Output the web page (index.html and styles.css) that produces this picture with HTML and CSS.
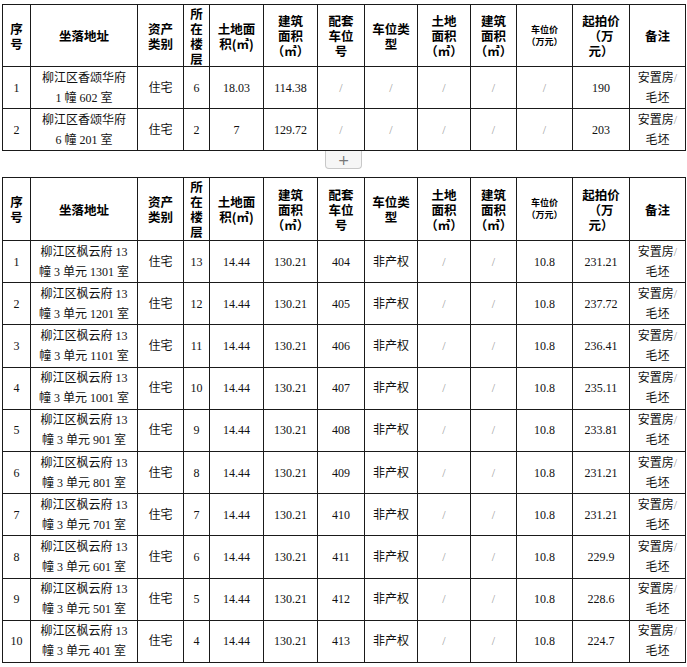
FILE: index.html
```html
<!DOCTYPE html>
<html lang="zh-CN">
<head>
<meta charset="utf-8">
<title>拍卖标的</title>
<link rel="stylesheet" href="styles.css">
</head>
<body>
<div class="page">
  <table class="grid">
    <colgroup>
      <col class="c1"><col class="c2"><col class="c3"><col class="c4"><col class="c5"><col class="c6"><col class="c7"><col class="c8"><col class="c9"><col class="c10"><col class="c11"><col class="c12"><col class="c13">
    </colgroup>
    <thead>
      <tr class="head">
        <th>序<br>号</th>
        <th>坐落地址</th>
        <th>资产<br>类别</th>
        <th>所<br>在<br>楼<br>层</th>
        <th>土地面<br>积(㎡)</th>
        <th>建筑<br>面积<br>（㎡）</th>
        <th>配套<br>车位<br>号</th>
        <th>车位类<br>型</th>
        <th>土地<br>面积<br>（㎡）</th>
        <th>建筑<br>面积<br>（㎡）</th>
        <th class="tiny">车位价<br>（万元）</th>
        <th>起拍价<br>（万<br>元）</th>
        <th>备注</th>
      </tr>
    </thead>
    <tbody>
      <tr>
        <td>1</td><td>柳江区香颂华府<br>1 幢 602 室</td><td>住宅</td><td>6</td><td>18.03</td><td>114.38</td>
        <td class="na">/</td><td class="na">/</td><td class="na">/</td><td class="na">/</td><td class="na">/</td>
        <td>190</td><td>安置房<span class="sl">/</span><br>毛坯</td>
      </tr>
      <tr>
        <td>2</td><td>柳江区香颂华府<br>6 幢 201 室</td><td>住宅</td><td>2</td><td>7</td><td>129.72</td>
        <td class="na">/</td><td class="na">/</td><td class="na">/</td><td class="na">/</td><td class="na">/</td>
        <td>203</td><td>安置房<span class="sl">/</span><br>毛坯</td>
      </tr>
    </tbody>
  </table>
  <div class="addbar"><button class="add" type="button">+</button></div>
  <table class="grid second">
    <colgroup>
      <col class="c1"><col class="c2"><col class="c3"><col class="c4"><col class="c5"><col class="c6"><col class="c7"><col class="c8"><col class="c9"><col class="c10"><col class="c11"><col class="c12"><col class="c13">
    </colgroup>
    <thead>
      <tr class="head">
        <th>序<br>号</th>
        <th>坐落地址</th>
        <th>资产<br>类别</th>
        <th>所<br>在<br>楼<br>层</th>
        <th>土地面<br>积(㎡)</th>
        <th>建筑<br>面积<br>（㎡）</th>
        <th>配套<br>车位<br>号</th>
        <th>车位类<br>型</th>
        <th>土地<br>面积<br>（㎡）</th>
        <th>建筑<br>面积<br>（㎡）</th>
        <th class="tiny">车位价<br>（万元）</th>
        <th>起拍价<br>（万<br>元）</th>
        <th>备注</th>
      </tr>
    </thead>
    <tbody>
      <tr><td>1</td><td>柳江区枫云府 13<br>幢 3 单元 1301 室</td><td>住宅</td><td>13</td><td>14.44</td><td>130.21</td><td>404</td><td>非产权</td><td class="na">/</td><td class="na">/</td><td>10.8</td><td>231.21</td><td>安置房<span class="sl">/</span><br>毛坯</td></tr>
      <tr><td>2</td><td>柳江区枫云府 13<br>幢 3 单元 1201 室</td><td>住宅</td><td>12</td><td>14.44</td><td>130.21</td><td>405</td><td>非产权</td><td class="na">/</td><td class="na">/</td><td>10.8</td><td>237.72</td><td>安置房<span class="sl">/</span><br>毛坯</td></tr>
      <tr><td>3</td><td>柳江区枫云府 13<br>幢 3 单元 1101 室</td><td>住宅</td><td>11</td><td>14.44</td><td>130.21</td><td>406</td><td>非产权</td><td class="na">/</td><td class="na">/</td><td>10.8</td><td>236.41</td><td>安置房<span class="sl">/</span><br>毛坯</td></tr>
      <tr><td>4</td><td>柳江区枫云府 13<br>幢 3 单元 1001 室</td><td>住宅</td><td>10</td><td>14.44</td><td>130.21</td><td>407</td><td>非产权</td><td class="na">/</td><td class="na">/</td><td>10.8</td><td>235.11</td><td>安置房<span class="sl">/</span><br>毛坯</td></tr>
      <tr><td>5</td><td>柳江区枫云府 13<br>幢 3 单元 901 室</td><td>住宅</td><td>9</td><td>14.44</td><td>130.21</td><td>408</td><td>非产权</td><td class="na">/</td><td class="na">/</td><td>10.8</td><td>233.81</td><td>安置房<span class="sl">/</span><br>毛坯</td></tr>
      <tr><td>6</td><td>柳江区枫云府 13<br>幢 3 单元 801 室</td><td>住宅</td><td>8</td><td>14.44</td><td>130.21</td><td>409</td><td>非产权</td><td class="na">/</td><td class="na">/</td><td>10.8</td><td>231.21</td><td>安置房<span class="sl">/</span><br>毛坯</td></tr>
      <tr><td>7</td><td>柳江区枫云府 13<br>幢 3 单元 701 室</td><td>住宅</td><td>7</td><td>14.44</td><td>130.21</td><td>410</td><td>非产权</td><td class="na">/</td><td class="na">/</td><td>10.8</td><td>231.21</td><td>安置房<span class="sl">/</span><br>毛坯</td></tr>
      <tr><td>8</td><td>柳江区枫云府 13<br>幢 3 单元 601 室</td><td>住宅</td><td>6</td><td>14.44</td><td>130.21</td><td>411</td><td>非产权</td><td class="na">/</td><td class="na">/</td><td>10.8</td><td>229.9</td><td>安置房<span class="sl">/</span><br>毛坯</td></tr>
      <tr><td>9</td><td>柳江区枫云府 13<br>幢 3 单元 501 室</td><td>住宅</td><td>5</td><td>14.44</td><td>130.21</td><td>412</td><td>非产权</td><td class="na">/</td><td class="na">/</td><td>10.8</td><td>228.6</td><td>安置房<span class="sl">/</span><br>毛坯</td></tr>
      <tr><td>10</td><td>柳江区枫云府 13<br>幢 3 单元 401 室</td><td>住宅</td><td>4</td><td>14.44</td><td>130.21</td><td>413</td><td>非产权</td><td class="na">/</td><td class="na">/</td><td>10.8</td><td>224.7</td><td>安置房<span class="sl">/</span><br>毛坯</td></tr>
    </tbody>
  </table>
</div>
</body>
</html>
```
FILE: styles.css
```css
html, body {
  margin: 0;
  padding: 0;
  background: #ffffff;
}
.page {
  padding: 4px 0 0 2px;
  width: 683px;
}
.grid {
  border-collapse: collapse;
  table-layout: fixed;
  width: 683px;
  font-family: "Liberation Serif", "Noto Sans CJK SC", serif;
  font-size: 12px;
  color: #111111;
}
.c1 { width: 28px; }
.c2 { width: 107px; }
.c3 { width: 46px; }
.c4 { width: 26px; }
.c5 { width: 54px; }
.c6 { width: 54px; }
.c7 { width: 47px; }
.c8 { width: 53px; }
.c9 { width: 53px; }
.c10 { width: 46px; }
.c11 { width: 56px; }
.c12 { width: 57px; }
.c13 { width: 56px; }
.grid th, .grid td {
  border: 1px solid #1a1a1a;
  padding: 0 1px;
  text-align: center;
  vertical-align: middle;
  overflow: visible;
}
.grid th {
  font-family: "Noto Sans CJK SC", sans-serif;
  font-weight: 700;
  font-size: 12.5px;
  line-height: 15px;
  height: 61px;
  color: #000000;
}
.second th {
  height: 62px;
}
.grid th.tiny {
  font-size: 9px;
  line-height: 12px;
}
.grid td {
  height: 41px;
  line-height: 20px;
}
.second td {
  height: 41.2px;
}
.grid td.na, .sl {
  color: #9a9a9a;
}
.addbar {
  display: flex;
  justify-content: center;
  margin-bottom: 8px;
}
.add {
  width: 37px;
  height: 18px;
  margin: 0;
  padding: 0;
  border: 1px solid #c8c8c8;
  border-top: none;
  border-radius: 0 0 4px 4px;
  background: #f6f6f6;
  color: #777777;
  font-family: "DejaVu Sans", sans-serif;
  font-size: 14px;
  line-height: 16px;
}
```
